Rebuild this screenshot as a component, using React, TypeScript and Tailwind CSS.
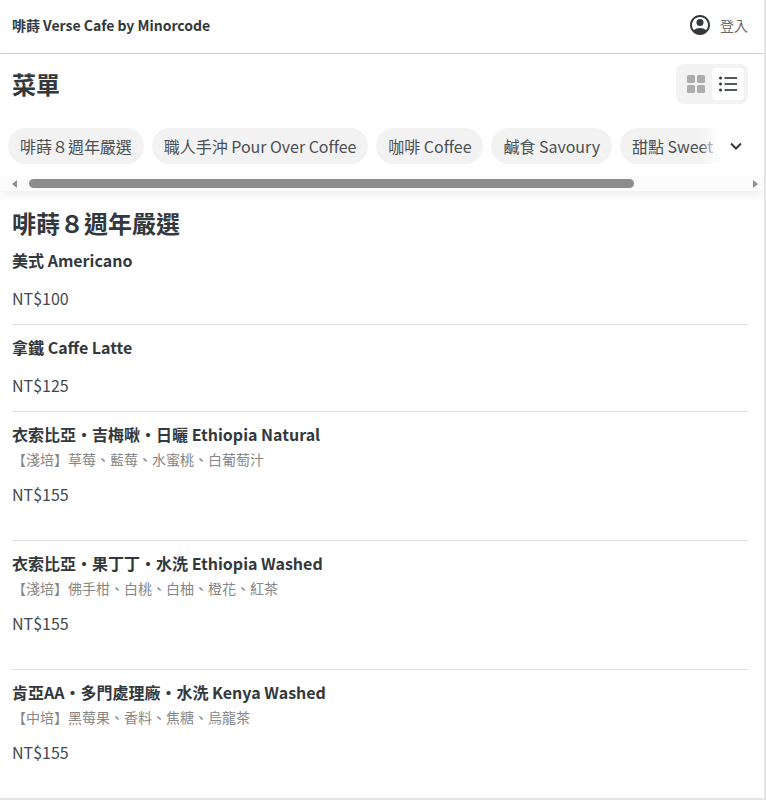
import React from "react";

function UserIcon() {
  return (
    <svg width="24" height="24" viewBox="0 0 24 24" fill="#33383c" className="block">
      <path d="M12 2C6.48 2 2 6.48 2 12s4.48 10 10 10 10-4.48 10-10S17.52 2 12 2zm6.14 15.12C16.45 15.8 14.32 15 12 15s-4.45.8-6.14 2.12C4.7 15.73 4 13.95 4 12c0-4.42 3.58-8 8-8s8 3.58 8 8c0 1.95-.7 3.73-1.86 5.12z" />
      <circle cx="12" cy="9.5" r="3.5" />
    </svg>
  );
}

function GridIcon() {
  return (
    <svg width="18" height="18" viewBox="0 0 18 18" fill="#adadad" className="block">
      <rect x="0" y="0" width="8" height="8" rx="1.5" />
      <rect x="10" y="0" width="8" height="8" rx="1.5" />
      <rect x="0" y="10" width="8" height="8" rx="1.5" />
      <rect x="10" y="10" width="8" height="8" rx="1.5" />
    </svg>
  );
}

function ListIcon() {
  return (
    <svg width="18" height="16" viewBox="0 0 18 16" className="block">
      <circle cx="1.5" cy="2" r="1.5" fill="#33383c" />
      <circle cx="1.5" cy="8" r="1.5" fill="#33383c" />
      <circle cx="1.5" cy="14" r="1.5" fill="#33383c" />
      <rect x="5.5" y="1" width="12.5" height="2" fill="#555a5e" />
      <rect x="5.5" y="7" width="12.5" height="2" fill="#555a5e" />
      <rect x="5.5" y="13" width="12.5" height="2" fill="#555a5e" />
    </svg>
  );
}

const pills = ["啡蒔８週年嚴選", "職人手沖 Pour Over Coffee", "咖啡 Coffee", "鹹食 Savoury", "甜點 Sweet"];

const items = [
  { name: "美式 Americano", price: "NT$100" },
  { name: "拿鐵 Caffe Latte", price: "NT$125" },
  { name: "衣索比亞・吉梅啾・日曬 Ethiopia Natural", desc: "【淺培】草莓、藍莓、水蜜桃、白葡萄汁", price: "NT$155" },
  { name: "衣索比亞・果丁丁・水洗 Ethiopia Washed", desc: "【淺培】佛手柑、白桃、白柚、橙花、紅茶", price: "NT$155" },
  { name: "肯亞AA・多門處理廠・水洗 Kenya Washed", desc: "【中培】黑莓果、香料、焦糖、烏龍茶", price: "NT$155", last: true },
];

export default function App() {
  return (
    <div className="w-[766px] h-[800px] overflow-hidden bg-white border-r-2 border-b-2 border-[#e4e4e4] text-[#33383c] font-['Noto_Sans_CJK_TC','Noto_Sans',sans-serif]">
      <header className="h-[54px] border-b border-[#d4d4d4] flex items-center justify-between pl-3 pr-4 pb-[3px]">
        <div className="text-sm font-bold tracking-[-0.02px]">啡蒔 Verse Cafe by Minorcode</div>
        <div className="flex items-center gap-[8px]">
          <UserIcon />
          <span className="text-[14px] text-[#666]">登入</span>
        </div>
      </header>

      <div className="relative z-10 shadow-[0_4px_10px_rgba(0,0,0,0.07)]">
        <div className="h-[60px] flex items-center justify-between pl-3 pr-4">
          <h1 className="text-2xl font-bold">菜單</h1>
          <div className="flex items-center p-1 rounded-lg bg-[#f2f2f2] h-10">
            <div className="w-8 h-8 flex items-center justify-center"><GridIcon /></div>
            <div className="w-8 h-8 flex items-center justify-center rounded bg-white"><ListIcon /></div>
          </div>
        </div>

        <div className="relative mt-[14px] h-9 pl-2 flex gap-2 overflow-hidden">
          {pills.map((p) => (
            <div key={p} className="h-9 shrink-0 px-3 flex items-center rounded-full bg-[#f2f2f2] text-base text-[#4a4f53] whitespace-nowrap tracking-[-0.03px]">
              {p}
            </div>
          ))}
          <div className="absolute right-0 top-0 h-9 w-[64px] flex items-center justify-end bg-gradient-to-r from-transparent via-white to-white via-[30%] pr-[20px]">
            <svg width="16" height="16" viewBox="0 0 16 16" fill="none" stroke="#33383c" strokeWidth="2" className="block">
              <path d="M3 5.5l5 5 5-5" />
            </svg>
          </div>
        </div>

        <div className="mt-3 h-[15px] flex items-center bg-[#fbfbfb]">
          <svg width="8" height="8" viewBox="0 0 8 8" fill="#8f8f8f" className="ml-[11px] shrink-0"><path d="M6 0v8L1 4z" /></svg>
          <div className="ml-[10px] w-[605px] h-[9px] rounded-full bg-[#8c8c8c]" />
          <div className="flex-1" />
          <svg width="8" height="8" viewBox="0 0 8 8" fill="#8f8f8f" className="mr-[5px] shrink-0"><path d="M2 0v8l5-4z" /></svg>
        </div>
      </div>

      <main className="pl-3 pr-4">
        <h2 className="text-2xl font-bold leading-[30px] mt-[17px]">啡蒔８週年嚴選</h2>
        <div>
          {items.map((it) => (
            <div key={it.name} className={it.last ? "" : "border-b border-[#dedede]"}>
              <div className={it.desc ? "h-[128px] pt-[10px]" : "h-[86px] pt-[10px]"}>
                <div className="text-base font-bold leading-6">{it.name}</div>
                {it.desc && <div className="text-sm leading-[26px] text-[#868686]">{it.desc}</div>}
                <div className={it.desc ? "text-base leading-6 mt-[10px] text-[#44494d]" : "text-base leading-6 mt-[14px] text-[#44494d]"}>{it.price}</div>
              </div>
            </div>
          ))}
        </div>
      </main>
    </div>
  );
}
